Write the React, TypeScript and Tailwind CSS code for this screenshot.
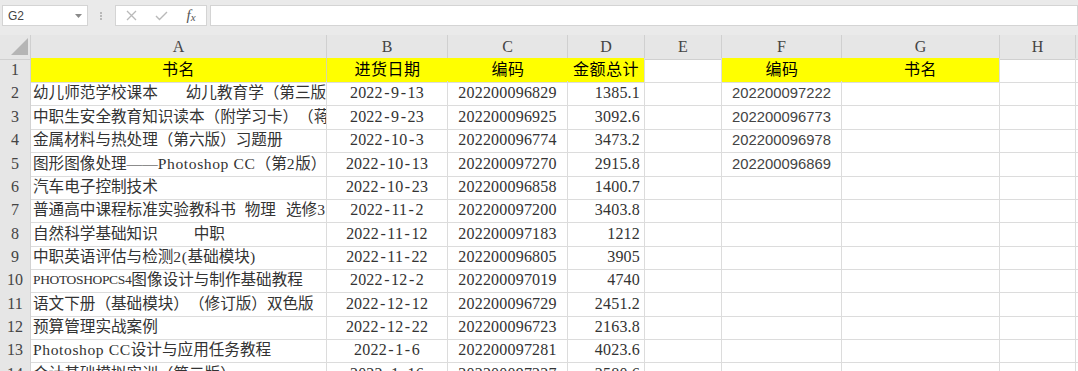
import React from 'react';

const GRID = 'grid grid-cols-[31px_296px_121px_120px_77px_77px_120px_158px_76px_1fr]';

function L({ children }: { children: React.ReactNode }) {
  return <span className="tracking-[0.6px]">{children}</span>;
}
function Caps({ children }: { children: React.ReactNode }) {
  return <span className="text-[13.5px] tracking-[-0.35px]">{children}</span>;
}
function DateText({ s }: { s: string }) {
  const parts = s.split('-');
  return (
    <>
      {parts.map((p, i) => (
        <React.Fragment key={i}>
          {i > 0 && <span className="px-[1.4px]">-</span>}
          {p}
        </React.Fragment>
      ))}
    </>
  );
}

type Row = { n: number; h: string; a: React.ReactNode; b: string; c: string; d: string; f?: string };

const rows: Row[] = [
  { n: 2, h: 'h-[24px]', a: <><span>幼儿师范学校课本</span><span className="ml-[28px]">幼儿教育学（第三版）</span></>, b: '2022-9-13', c: '202200096829', d: '1385.1', f: '202200097222' },
  { n: 3, h: 'h-[23px]', a: <>中职生安全教育知识读本（附学习卡）（蒋雯）</>, b: '2022-9-23', c: '202200096925', d: '3092.6', f: '202200096773' },
  { n: 4, h: 'h-[24px]', a: <>金属材料与热处理（第六版）习题册</>, b: '2022-10-3', c: '202200096774', d: '3473.2', f: '202200096978' },
  { n: 5, h: 'h-[23px]', a: <>图形图像处理——<L>Photoshop CC</L>（第<L>2</L>版）</>, b: '2022-10-13', c: '202200097270', d: '2915.8', f: '202200096869' },
  { n: 6, h: 'h-[23px]', a: <>汽车电子控制技术</>, b: '2022-10-23', c: '202200096858', d: '1400.7' },
  { n: 7, h: 'h-[24px]', a: <><span>普通高中课程标准实验教科书</span><span className="ml-[9px]">物理</span><span className="ml-[10px]">选修<L>3</L></span></>, b: '2022-11-2', c: '202200097200', d: '3403.8' },
  { n: 8, h: 'h-[23px]', a: <><span>自然科学基础知识</span><span className="ml-[36px]">中职</span></>, b: '2022-11-12', c: '202200097183', d: '1212' },
  { n: 9, h: 'h-[23px]', a: <>中职英语评估与检测<L>2(</L>基础模块<L>)</L></>, b: '2022-11-22', c: '202200096805', d: '3905' },
  { n: 10, h: 'h-[24px]', a: <><Caps>PHOTOSHOPCS4</Caps>图像设计与制作基础教程</>, b: '2022-12-2', c: '202200097019', d: '4740' },
  { n: 11, h: 'h-[23px]', a: <>语文下册（基础模块）（修订版）双色版</>, b: '2022-12-12', c: '202200096729', d: '2451.2' },
  { n: 12, h: 'h-[23px]', a: <>预算管理实战案例</>, b: '2022-12-22', c: '202200096723', d: '2163.8' },
  { n: 13, h: 'h-[24px]', a: <><L>Photoshop CC</L>设计与应用任务教程</>, b: '2022-1-6', c: '202200097281', d: '4023.6' },
  { n: 14, h: 'h-[24px]', a: <>会计基础模拟实训（第二版）</>, b: '2022-1-16', c: '202200097227', d: '2580.6' },
];

const cell = 'border-r border-b border-[#dcdcdc] flex items-center overflow-hidden whitespace-nowrap';
const rowHead =
  "bg-[#e6e6e6] border-r border-b border-[#d2d2d2] flex items-center justify-center text-[16px] text-[#444] font-['Liberation_Serif',serif]";
const numCls = "font-['Liberation_Serif',serif] text-[16px] tracking-[0.2px] text-[#333]";

export default function App() {
  const letters = ['A', 'B', 'C', 'D', 'E', 'F', 'G', 'H'];
  return (
    <div className="w-[1078px] h-[371px] overflow-hidden bg-white relative [text-spacing-trim:space-all]">
      {/* toolbar */}
      <div className="h-[35px] bg-[#eaeaea] flex items-start pt-[5px]">
        <div className="ml-[2px] w-[86px] h-[21px] border border-[#d4d4d4] bg-white flex items-center justify-between pl-[5px] pr-[5px] font-['Liberation_Sans',sans-serif] text-[12px] text-[#444]">
          <span>G2</span>
          <svg width="7" height="4" viewBox="0 0 7 4">
            <polygon points="0,0 7,0 3.5,4" fill="#8a8a8a" />
          </svg>
        </div>
        <div className="ml-[12px] mt-[7px] flex flex-col gap-[1px]">
          <div className="w-[2px] h-[2px] bg-[#b8b8b8]" />
          <div className="w-[2px] h-[2px] bg-[#b8b8b8]" />
          <div className="w-[2px] h-[2px] bg-[#b8b8b8]" />
        </div>
        <div className="ml-[13px] w-[92px] h-[21px] border border-[#d4d4d4] bg-white grid grid-cols-3 items-center">
          <div className="flex justify-center">
            <svg width="11" height="11" viewBox="0 0 11 11">
              <path d="M1 1 L10 10 M10 1 L1 10" stroke="#b9b9b9" strokeWidth="1.3" fill="none" />
            </svg>
          </div>
          <div className="flex justify-center">
            <svg width="13" height="10" viewBox="0 0 13 10">
              <path d="M1 5 L4.5 8.5 L12 1" stroke="#b9b9b9" strokeWidth="1.4" fill="none" />
            </svg>
          </div>
          <div className="flex justify-center font-['Liberation_Serif',serif] italic text-[#555] text-[15px] leading-none">
            <span>f</span>
            <span className="text-[11px] mt-[4px]">x</span>
          </div>
        </div>
        <div className="ml-[3px] flex-1 h-[21px] border border-[#d4d4d4] bg-white" />
      </div>

      {/* column header */}
      <div className={`${GRID} h-[23px]`}>
        <div className="bg-[#e6e6e6] border-r border-b border-[#d0d0d0] relative">
          <svg className="absolute left-0 top-0" width="30" height="22" viewBox="0 0 30 22">
            <polygon points="11,20 28,20 28,3" fill="#b5b5b5" />
          </svg>
        </div>
        {letters.map((l) => (
          <div
            key={l}
            className="bg-[#e6e6e6] border-r border-b border-[#d0d0d0] flex items-center justify-center font-['Liberation_Serif',serif] text-[16px] text-[#444]"
          >
            {l}
          </div>
        ))}
        <div className="bg-[#e6e6e6] border-b border-[#d0d0d0]" />
      </div>

      {/* row 1 */}
      <div className={`${GRID} h-[23px] font-['Liberation_Serif','Noto_Sans_CJK_SC',serif] text-[16px] text-black`}>
        <div className={rowHead}>1</div>
        <div className="bg-[#ffff00] border-r border-b border-r-[#d8d8a0] border-b-[#dcdcdc] flex items-center justify-center tracking-[0.5px]">书名</div>
        <div className="bg-[#ffff00] border-b border-[#dcdcdc] flex items-center justify-center tracking-[0.5px]">进货日期</div>
        <div className="bg-[#ffff00] border-b border-[#dcdcdc] flex items-center justify-center tracking-[0.5px]">编码</div>
        <div className="bg-[#ffff00] border-r border-b border-[#dcdcdc] flex items-center justify-center tracking-[0.5px]">金额总计</div>
        <div className={cell} />
        <div className="bg-[#ffff00] border-b border-[#dcdcdc] flex items-center justify-center tracking-[0.5px]">编码</div>
        <div className="bg-[#ffff00] border-r border-b border-[#dcdcdc] flex items-center justify-center tracking-[0.5px]">书名</div>
        <div className={cell} />
        <div className="border-b border-[#dcdcdc]" />
      </div>

      {rows.map((r) => (
        <div key={r.n} className={`${GRID} ${r.h}`}>
          <div className={rowHead}>{r.n}</div>
          <div className={`${cell} pl-[2px] font-['Liberation_Serif','Noto_Sans_CJK_SC',serif] text-[15.6px] text-[#333]`}>
            {r.a}
          </div>
          <div className={`${cell} justify-center ${numCls}`}>
            <DateText s={r.b} />
          </div>
          <div className={`${cell} justify-center ${numCls}`}>{r.c}</div>
          <div className={`${cell} justify-end pr-[4px] ${numCls}`}>{r.d}</div>
          <div className={cell} />
          <div className={`${cell} justify-center font-['Liberation_Sans',sans-serif] text-[14.8px] text-[#444]`}>{r.f ?? ''}</div>
          <div className={cell} />
          <div className={cell} />
          <div className="border-b border-[#dcdcdc]" />
        </div>
      ))}
    </div>
  );
}
